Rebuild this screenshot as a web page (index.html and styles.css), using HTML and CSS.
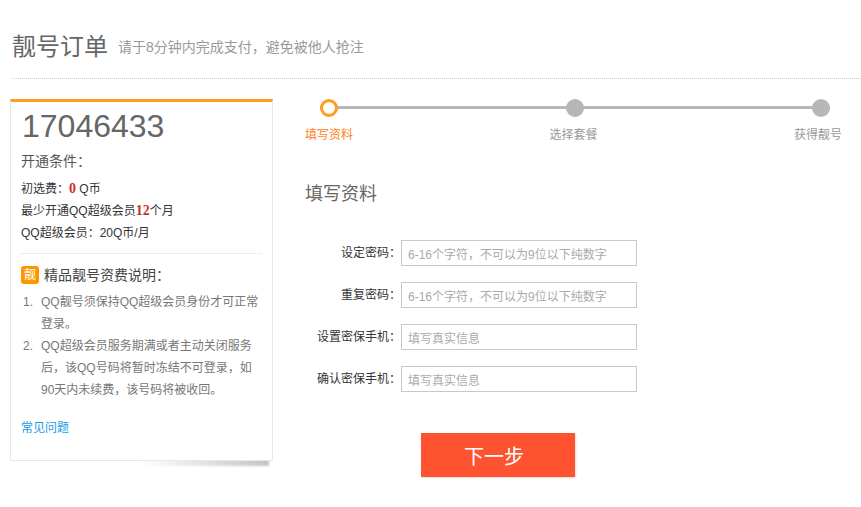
FILE: index.html
```html
<!DOCTYPE html>
<html lang="zh-CN">
<head>
<meta charset="utf-8">
<title>靓号订单</title>
<link rel="stylesheet" href="styles.css">
</head>
<body>
<header class="head">
  <h1 class="head-title">靓号订单</h1>
  <span class="head-tip">请于8分钟内完成支付，避免被他人抢注</span>
</header>
<main class="main">
  <aside class="card">
    <div class="number">17046433</div>
    <h2 class="cond-title">开通条件：</h2>
    <ul class="cond">
      <li>初选费：<b>0</b> Q币</li>
      <li>最少开通QQ超级会员<b>12</b>个月</li>
      <li>QQ超级会员：20Q币/月</li>
    </ul>
    <h3 class="fee-title"><span class="badge">靓</span>精品靓号资费说明：</h3>
    <ol class="fee">
      <li>QQ靓号须保持QQ超级会员身份才可正常登录。</li>
      <li>QQ超级会员服务期满或者主动关闭服务后，该QQ号码将暂时冻结不可登录，如90天内未续费，该号码将被收回。</li>
    </ol>
    <a class="faq" href="#">常见问题</a>
  </aside>
  <section class="content">
    <div class="track">
      <span class="dot dot-on"></span>
      <span class="dot"></span>
      <span class="dot"></span>
    </div>
    <div class="labels">
      <span class="label-on">填写资料</span>
      <span>选择套餐</span>
      <span>获得靓号</span>
    </div>
    <h2 class="form-title">填写资料</h2>
    <form class="form">
      <label class="row"><span class="row-name">设定密码：</span><input class="field" placeholder="6-16个字符，不可以为9位以下纯数字"></label>
      <label class="row"><span class="row-name">重复密码：</span><input class="field" placeholder="6-16个字符，不可以为9位以下纯数字"></label>
      <label class="row"><span class="row-name">设置密保手机：</span><input class="field" placeholder="填写真实信息"></label>
      <label class="row"><span class="row-name">确认密保手机：</span><input class="field" placeholder="填写真实信息"></label>
      <button class="next" type="button">下一步</button>
    </form>
  </section>
</main>
</body>
</html>
```
FILE: styles.css
```css
* { box-sizing: border-box; }
html, body { margin: 0; padding: 0; }
body {
  width: 861px;
  height: 507px;
  overflow: hidden;
  background: #fff;
  font-family: "Liberation Sans", "Noto Sans CJK SC", sans-serif;
  font-size: 12px;
  color: #333;
}
h1, h2, h3, ul, ol { margin: 0; padding: 0; font-weight: normal; }
ul, ol { list-style: none; }

.head {
  margin-left: 12px;
  height: 79px;
  padding-top: 30px;
  border-bottom: 1px dotted #ccc;
  display: flex;
  align-items: flex-start;
}
.head-title { font-size: 24px; line-height: 34px; color: #666; }
.head-tip { margin-left: 10px; font-size: 14px; line-height: 34px; color: #999; }

.main { display: flex; padding: 20px 0 0 10px; }

.card {
  position: relative;
  width: 263px;
  height: 362px;
  padding: 6px 10px 0;
  border: 1px solid #e8e8e8;
  border-top: 3px solid #ff9d22;
  background: #fff;
}
.card::after {
  content: "";
  position: absolute;
  z-index: -1;
  left: 130px;
  right: 3px;
  bottom: -6px;
  height: 7px;
  background: linear-gradient(to right, rgba(190,190,190,0), #c4c4c4);
  filter: blur(1px);
}
.number { margin-left: 1px; font-size: 32px; line-height: 37px; color: #666; }
.cond-title { margin-top: 5px; font-size: 14px; line-height: 22px; color: #555; }
.cond { margin-top: 6px; padding-bottom: 9px; border-bottom: 1px dotted #ddd; }
.cond li { font-size: 12px; line-height: 22px; color: #333; }
.cond b { color: #c9302c; font-family: "Liberation Serif", "Noto Sans CJK SC", serif; font-size: 14px; line-height: 14px; }
.fee-title { display: flex; align-items: center; margin-top: 12px; font-size: 14px; line-height: 18px; color: #444; }
.badge {
  width: 18px;
  height: 18px;
  margin-right: 5px;
  border-radius: 3px;
  background: #ff9600;
  color: #fff;
  font-size: 12px;
  text-align: center;
}
.fee { margin-top: 7px; counter-reset: fee; }
.fee li {
  position: relative;
  padding-left: 20px;
  line-height: 22px;
  color: #777;
  counter-increment: fee;
}
.fee li::before {
  content: counter(fee) ".";
  position: absolute;
  left: 2px;
  top: 0;
}
.faq { display: block; margin-top: 16px; line-height: 22px; color: #1a9be8; text-decoration: none; }

.content { width: 551px; margin-left: 32px; }
.track {
  position: relative;
  display: flex;
  justify-content: space-between;
  width: 510px;
  margin: 0 0 0 15px;
}
.track::before {
  content: "";
  position: absolute;
  left: 0;
  right: 0;
  top: 7px;
  height: 3px;
  background: #b7b7b7;
}
.dot {
  position: relative;
  width: 18px;
  height: 18px;
  border-radius: 50%;
  background: #b7b7b7;
}
.dot-on { background: #fff; border: 3px solid #ff9d22; }
.labels {
  display: flex;
  justify-content: space-between;
  width: 537px;
  margin-top: 9px;
  line-height: 18px;
  color: #999;
}
.label-on { color: #ff7f1a; }
.form-title { margin-top: 37px; font-size: 18px; line-height: 26px; color: #666; }
.form { margin-top: 33px; display: flex; flex-direction: column; gap: 16px; }
.row { display: flex; align-items: center; height: 26px; }
.row-name { width: 96px; padding-bottom: 4px; text-align: right; color: #333; }
.field {
  width: 236px;
  height: 26px;
  padding: 4px 6px 0;
  border: 1px solid #c8c8c8;
  border-radius: 0;
  outline: none;
  font-family: inherit;
  font-size: 12px;
  background: #fff;
}
.field::placeholder { color: #aaa; opacity: 1; }
.next {
  align-self: flex-start;
  width: 154px;
  height: 44px;
  margin: 25px 0 0 116px;
  padding: 0 8px 0 0;
  border: 0;
  background: #ff5230;
  box-shadow: 1px 1px 2px rgba(0,0,0,.15);
  color: #fff;
  font-family: inherit;
  font-size: 20px;
}
```
